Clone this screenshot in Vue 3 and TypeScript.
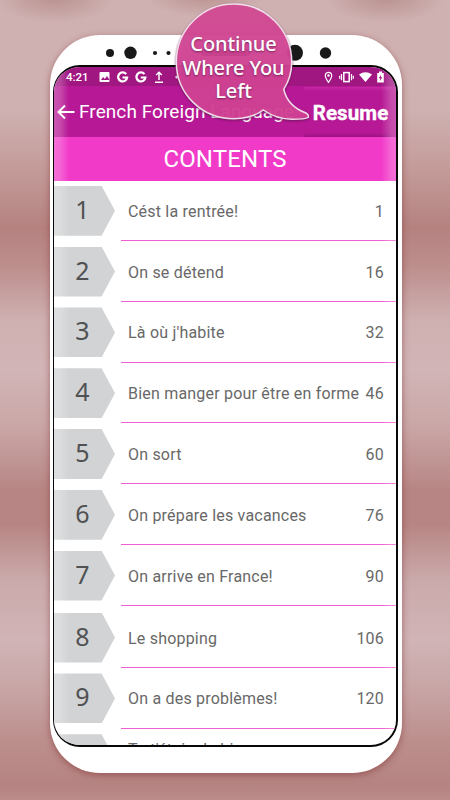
<script setup lang="ts">
interface Chapter {
  num: number
  title: string
  page: number | string
}

const chapters: Chapter[] = [
  { num: 1, title: 'Cést la rentrée!', page: 1 },
  { num: 2, title: 'On se détend', page: 16 },
  { num: 3, title: "Là où j'habite", page: 32 },
  { num: 4, title: 'Bien manger pour être en forme', page: 46 },
  { num: 5, title: 'On sort', page: 60 },
  { num: 6, title: 'On prépare les vacances', page: 76 },
  { num: 7, title: 'On arrive en France!', page: 90 },
  { num: 8, title: 'Le shopping', page: 106 },
  { num: 9, title: 'On a des problèmes!', page: 120 },
  { num: 10, title: "Tu t'étais du bien", page: '' },
]
</script>

<template>
  <main class="stage">
    <div class="phone">
      <svg class="sensors" viewBox="0 0 352 30" width="352" height="30">
        <g fill="#191919">
          <circle cx="60" cy="18" r="4" />
          <circle cx="80.5" cy="17.8" r="6.2" />
          <circle cx="105" cy="18" r="2.1" />
          <circle cx="118.5" cy="18" r="2.1" />
          <rect x="151" y="14" width="49" height="7" rx="3.5" />
          <circle cx="245" cy="17.8" r="8" />
          <circle cx="275.5" cy="18" r="5.7" />
        </g>
      </svg>
      <div class="screen">
        <header class="status">
          <span class="clock">4:21</span>
          <svg class="left-icons" width="110" height="14" viewBox="0 0 110 14" fill="none">
            <path d="M1.5 2h8q1 0 1 1v8q0 1-1 1h-8q-1 0-1-1V3q0-1 1-1z" fill="#fff" />
            <path d="M2 10l2.200-3 1.600 1.900 2.200-2.900 2.500 4z" fill="#a11782" />
            <path d="M27.200 4.200A4.500 4.500 0 1 0 28.100 7.500H23.500" stroke="#fff" stroke-width="2.200" />
            <path d="M45.500 4.200A4.500 4.500 0 1 0 46.400 7.500H41.800" stroke="#fff" stroke-width="2.200" />
            <path d="M56 12.300h8M60 10V2.500M57.200 5L60 2.200 62.800 5" stroke="#fff" stroke-width="1.500" />
            <circle cx="78" cy="7" r="1.600" fill="#fff" />
          </svg>
          <svg class="right-icons" width="62" height="14" viewBox="0 0 62 14" fill="none">
            <path d="M6.500 12.300C4.500 9.500 3.300 7.600 3.300 5.500a3.200 3.200 0 0 1 6.400 0c0 2.100-1.200 4-3.200 6.800z" stroke="#fff" stroke-width="1.200" />
            <circle cx="6.500" cy="5.500" r="1.200" fill="#fff" />
            <rect x="21.800" y="2.600" width="5.400" height="9" stroke="#fff" stroke-width="1.500" />
            <path d="M19.500 4v6.200M17.700 5.700v3M29.500 4v6.200M31.300 5.700v3" stroke="#fff" stroke-width="1.200" />
            <path d="M37 4.500q6.500-4.600 13 0L43.500 12z" fill="#fff" />
            <path d="M55.200 3h1.800V1.600h3V3h1.800v9.500h-6.600z" fill="#fff" />
            <path d="M59.200 4.500l-2.500 3.700h1.600l-.5 3 2.500-4h-1.600z" fill="#a11782" />
          </svg>
        </header>
        <nav class="appbar">
          <svg class="back" width="18" height="18" viewBox="0 0 18 18" fill="none" stroke="#fff" stroke-width="1.900">
            <path d="M17.500 9H1.500M8 2.500L1.500 9 8 15.500" />
          </svg>
          <h1>French Foreign Language</h1>
          <button class="resume">Resume</button>
        </nav>
        <h2 class="heading">CONTENTS</h2>
        <ol class="list">
          <li
            v-for="c in chapters"
            :key="c.num"
            class="row"
            :class="{ tall: c.num === 7, partial: c.num === 10 }"
          >
            <span class="badge">{{ c.num }}</span>
            <div class="entry">
              <span class="title">{{ c.title }}</span>
              <span class="page">{{ c.page }}</span>
            </div>
          </li>
        </ol>
      </div>
    </div>

    <div class="bubble">
      <svg class="bubble-shape" width="140" height="122" viewBox="0 0 140 122">
        <defs>
          <linearGradient id="bubble-fill" x1="0" y1="0" x2="0" y2="1">
            <stop offset="0" stop-color="#dc5099" />
            <stop offset=".45" stop-color="#da4799" />
            <stop offset="1" stop-color="#d94499" />
          </linearGradient>
        </defs>
        <path
          d="M113.700 89.300C119.500 80.500 121.700 71 121.700 62A57.700 58 0 0 0 64 4C32 4 6.300 30 6.300 62S32 118.800 64 118.800C76 118.800 86 115.500 93.300 110C102 116 112 119.300 122 119.300C129 119.300 136 119 138.200 117.500C138.800 115.500 138 114 136 113C126 109.500 117 103 113.700 89.300Z"
          fill="url(#bubble-fill)"
          fill-opacity=".89"
          stroke="#f1dde9"
          stroke-width="1.500"
        />
      </svg>
      <p class="bubble-text">Continue<br />Where You<br />Left</p>
    </div>
  </main>
</template>

<style>
body {
  margin: 0;
}
</style>

<style scoped>
.stage {
  position: relative;
  box-sizing: border-box;
  width: 450px;
  height: 800px;
  padding: 35px 48px 0 50px;
  overflow: hidden;
  font-family: Roboto, sans-serif;
  background:
    radial-gradient(ellipse 60px 26px at 55px -3px, rgba(179, 137, 134, 0.8) 0%, transparent 100%),
    radial-gradient(ellipse 60px 22px at 205px -5px, rgba(179, 137, 134, 0.8) 0%, transparent 100%),
    radial-gradient(ellipse 60px 26px at 385px -3px, rgba(179, 137, 134, 0.8) 0%, transparent 100%),
    linear-gradient(
      #cfb1b1 0,
      #d0b1b2 50px,
      #cfb1b1 110px,
      #c39b99 170px,
      #b58280 228px,
      #bc8e8c 265px,
      #cfb0b1 320px,
      #d2b5b7 370px,
      #caa7a7 425px,
      #b78684 490px,
      #b78684 525px,
      #cbaaab 580px,
      #d1b4b6 640px,
      #c8a5a5 690px,
      #bb8d8b 745px,
      #b58482 785px,
      #b98b89 800px
    );
}

.phone {
  display: flex;
  flex-direction: column;
  box-sizing: border-box;
  width: 352px;
  height: 738px;
  padding-left: 3px;
  background: #fff;
  border-radius: 50px;
  box-shadow: 0 2px 7px 0 rgba(125, 45, 45, 0.55);
}

.sensors {
  display: block;
  flex: none;
  margin-left: -3px;
}

.screen {
  position: relative;
  box-sizing: border-box;
  width: 345px;
  height: 682px;
  overflow: hidden;
  background: #fff;
  border: 1.5px solid #080808;
  border-width: 2px 2px 2px 1.5px;
  border-radius: 27px;
}

.screen::after {
  content: '';
  position: absolute;
  inset: 0;
  background: linear-gradient(
    90deg,
    rgba(255, 255, 255, 0.27),
    rgba(255, 255, 255, 0.22) 6px,
    transparent 15px,
    transparent 327px,
    rgba(255, 255, 255, 0.22) 337px,
    rgba(255, 255, 255, 0.25)
  );
}

.status {
  display: flex;
  align-items: center;
  box-sizing: border-box;
  height: 19px;
  padding: 1px 12px 0;
  background: #a11782;
}

.clock {
  width: 33px;
  color: #fff;
  font-size: 11.5px;
  font-weight: 500;
}

.right-icons {
  margin-left: auto;
}

.appbar {
  display: flex;
  align-items: center;
  height: 51px;
  padding-left: 3px;
  color: #fff;
  background: #b71895;
}

.back {
  flex: none;
}

.appbar h1 {
  flex: 1;
  min-width: 0;
  margin: 0 0 0 4px;
  font-size: 19px;
  font-weight: 400;
  letter-spacing: 0.07px;
  white-space: nowrap;
}

.resume {
  flex: none;
  width: 87px;
  height: 50px;
  margin: 0 5px 0 0;
  padding: 3px 0 0 6px;
  color: #fff;
  font: 700 20.5px Roboto, sans-serif;
  letter-spacing: 0.1px;
  -webkit-text-stroke: 0.4px #fff;
  background: #b71895;
  border: 0;
  box-shadow:
    inset 0 3px 3px -1px rgba(211, 56, 177, 0.55),
    inset 0 -3px 3px -1px rgba(130, 15, 120, 0.5);
}

.heading {
  height: 44px;
  margin: 0;
  color: #fff;
  font-size: 24px;
  font-weight: 400;
  letter-spacing: 0.15px;
  line-height: 44px;
  text-align: center;
  background: #f23ac9;
}

.list {
  margin: -0.8px 0 0;
  padding: 0;
  list-style: none;
}

.row {
  display: flex;
  box-sizing: border-box;
  height: 60.8px;
  padding-top: 5.6px;
}

.row.tall {
  height: 62px;
}

.row.tall .entry {
  margin-bottom: 1.2px;
}

.badge {
  flex: none;
  box-sizing: border-box;
  width: 61px;
  height: 50px;
  padding-right: 4px;
  color: #505153;
  font: 25px/47px 'Noto Sans', sans-serif;
  text-align: center;
  background: #d1d3d5;
  clip-path: polygon(0 0, 78% 0, 100% 50%, 78% 100%, 0 100%);
}

.entry {
  display: flex;
  flex: 1;
  align-items: center;
  justify-content: space-between;
  box-sizing: border-box;
  margin-left: 6px;
  padding: 0 12px 3px 7px;
  color: #686868;
  font-size: 16px;
  letter-spacing: 0.2px;
  white-space: nowrap;
  border-bottom: 1.4px solid #f05fd2;
}

.row.partial .badge {
  font-size: 22px;
}

.row.partial .entry {
  padding-bottom: 24px;
}

.bubble {
  position: absolute;
  top: 0;
  left: 170px;
}

.bubble-shape {
  display: block;
  filter: drop-shadow(0 1px 1px rgba(80, 20, 70, 0.7));
}

.bubble-text {
  position: absolute;
  top: 32px;
  left: 0;
  width: 127px;
  margin: 0;
  color: #fff;
  font: 500 20px/23.5px 'Noto Sans', sans-serif;
  letter-spacing: -0.1px;
  text-align: center;
  text-shadow: 0 1px 2px rgba(90, 20, 70, 0.7);
}
</style>
